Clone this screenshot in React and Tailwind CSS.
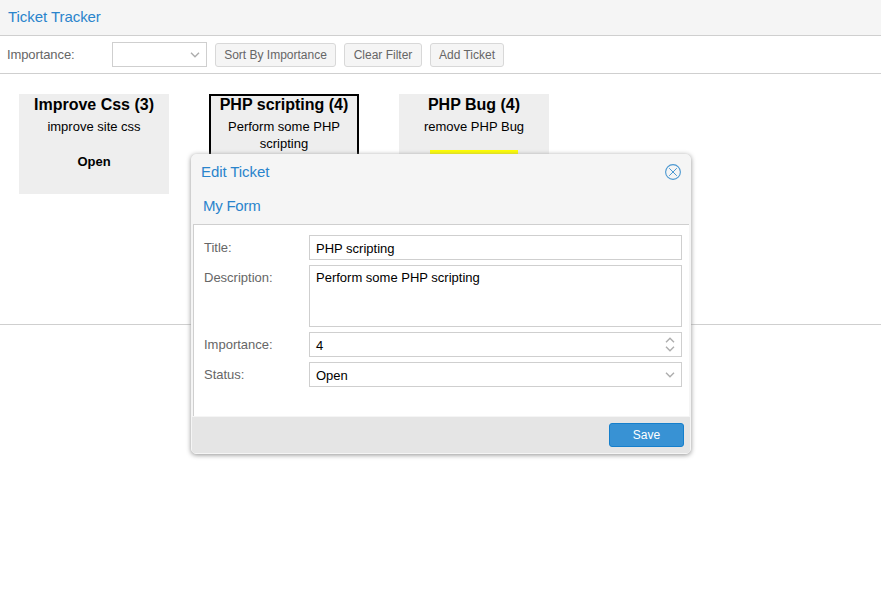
const Chevron = ({ up = false }) => (
  <svg width="10" height="6" viewBox="0 0 10 6" fill="none" stroke="#adadad" strokeWidth="1.4" className={up ? 'rotate-180' : ''}>
    <path d="M1 .8 5 4.8 9 .8" />
  </svg>
);

const ToolButton = ({ className, children }) => (
  <button className={`h-6 shrink-0 whitespace-nowrap rounded-[3px] border border-[#d8d8d8] bg-[#f5f5f5] text-[12px] leading-[22px] text-[#666] ${className}`}>
    {children}
  </button>
);

const Ticket = ({ title, text, status, className = '' }) => (
  <article className={`h-[100px] w-[150px] shrink-0 bg-[#eee] text-center text-[13px] leading-[17px] text-black ${className}`}>
    <h2 className="h-6 whitespace-nowrap pt-px text-[16px] font-bold leading-[19px]">{title}</h2>
    <p>{text}</p>
    {status}
  </article>
);

const Row = ({ label, boxClass, children }) => (
  <div className="flex">
    <label className="w-[105px] shrink-0 pt-[5px] leading-[15px] text-[#666]">{label}</label>
    <div className={`flex w-[373px] justify-between border border-[#cfcfcf] bg-white pl-1.5 pr-[6px] text-black ${boxClass}`}>{children}</div>
  </div>
);

export default function App() {
  return (
    <main className="relative h-[607px] w-[881px] overflow-hidden bg-white font-['Liberation_Sans',Arial,sans-serif] text-[13px]">
      <header className="h-9 border-b border-[#cfcfcf] bg-[#f5f5f5] pl-2 text-[15px] leading-[34px] tracking-[-0.06px] text-[#2a84cc]">Ticket Tracker</header>
      <div className="flex h-[38px] items-center border-b border-[#cfcfcf] pl-[7px]">
        <span className="w-[105px] tracking-[-0.1px] text-[#666]">Importance:</span>
        <div className="flex h-[25px] w-[95px] items-center justify-end border border-[#cfcfcf] pr-[6px]"><Chevron /></div>
        <ToolButton className="ml-2 w-[121px]">Sort By Importance</ToolButton>
        <ToolButton className="ml-2 w-[78px]">Clear Filter</ToolButton>
        <ToolButton className="ml-2 w-[74px]">Add Ticket</ToolButton>
      </div>
      <section className="flex h-[251px] gap-10 border-b border-[#cfcfcf] pl-[19px] pt-5">
        <Ticket title="Improve Css (3)" text="improve site css" status={<p className="pt-[18px] font-bold">Open</p>} />
        <Ticket title="PHP scripting (4)" text="Perform some PHP scripting" className="border-2 border-black px-2 [&>h2]:-mx-2 [&>h2]:h-[23px] [&>h2]:-mt-px [&>h2]:pt-0" />
        <Ticket title="PHP Bug (4)" text="remove PHP Bug" status={<div className="mx-auto mt-[15px] h-5 w-[88px] bg-[#ff0]" />} />
      </section>

      <div className="absolute left-[191px] top-[154px] flex h-[300px] w-[500px] flex-col rounded-[5px] border border-[#f5f5f5] bg-[#f5f5f5] shadow-[0_1px_5px_#909090]">
        <div className="flex h-[34px] shrink-0 items-center justify-between pl-[9px] pr-[9px] text-[15px] tracking-[-0.08px] text-[#2a84cc]">
          <span>Edit Ticket</span>
          <svg width="16" height="16" viewBox="0 0 16 16" fill="none" stroke="#4b98d1">
            <circle cx="8" cy="8" r="7.4" strokeWidth="1.1" />
            <path d="m4.2 4.2 7.6 7.6m0-7.6-7.6 7.6" strokeWidth="1" />
          </svg>
        </div>
        <div className="h-[35px] shrink-0 pl-[11px] text-[15px] leading-[34px] tracking-[-0.25px] text-[#2a84cc]">My Form</div>
        <form className="ml-px flex h-[192px] w-[496px] shrink-0 flex-col gap-[5px] border-l border-t border-[#cfcfcf] bg-white pl-[10px] pt-[10px]">
          <Row label="Title:" boxClass="h-[25px] items-center"><span className="pt-[2px] leading-[15px]">PHP scripting</span></Row>
          <Row label="Description:" boxClass="h-[62px] pt-[4px] leading-[15px]">Perform some PHP scripting</Row>
          <Row label="Importance:" boxClass="h-[25px] items-center">
            <span className="pt-[2px] leading-[15px]">4</span>
            <span className="flex flex-col gap-[3px]"><Chevron up /><Chevron /></span>
          </Row>
          <Row label="Status:" boxClass="h-[25px] items-center"><span className="pt-[2px] leading-[15px]">Open</span><Chevron /></Row>
        </form>
        <footer className="mt-px flex flex-1 items-start justify-end rounded-b-[3px] bg-[#e5e5e5] pr-[6px] pt-[6px]">
          <button type="button" className="h-6 w-[75px] rounded-[3px] border border-[#157fcc] bg-[#3892d4] text-[12px] leading-[22px] text-white">Save</button>
        </footer>
      </div>
    </main>
  );
}
